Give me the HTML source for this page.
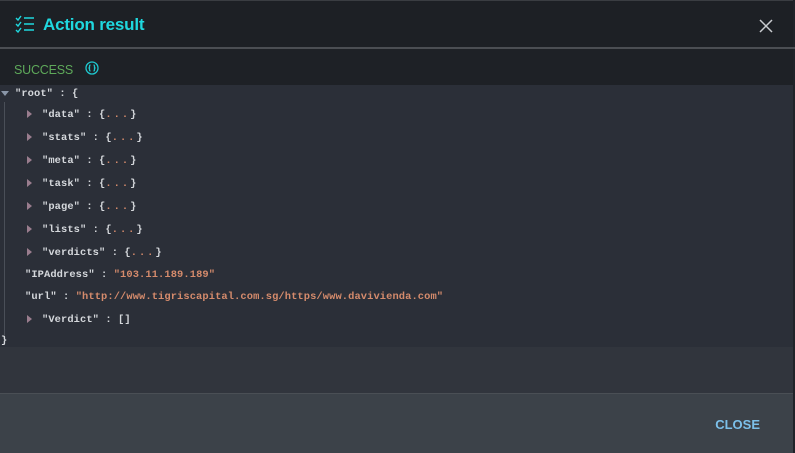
<!DOCTYPE html>
<html><head><style>
body{margin:0;width:795px;height:453px;background:#202329;overflow:hidden;font-family:"Liberation Sans",sans-serif;}
.hdr{position:absolute;left:0;top:0;width:793px;height:47px;background:#1d2025;border-top:1px solid #3a3d42;}
.hdr .t{position:absolute;left:43px;top:14px;color:#1fd8df;font-size:17px;font-weight:bold;letter-spacing:-0.2px;}
.line{position:absolute;left:0;top:47px;width:795px;height:2px;background:#4b4e53;}
.succ{position:absolute;left:0;top:49px;width:793px;height:36px;background:#1e2126;}
.succ span{position:absolute;left:14px;top:14px;color:#5ea95a;font-size:12.5px;letter-spacing:-0.2px;}
.json{position:absolute;left:0;top:85px;width:793px;height:262px;background:#2b2f38;font-family:"Liberation Mono",monospace;font-size:10.4px;letter-spacing:0.1px;font-weight:bold;color:#d5d8dc;}
.gap{position:absolute;left:0;top:347px;width:793px;height:46px;background:#31353d;}
.foot{position:absolute;left:0;top:393px;width:793px;height:59px;background:#3c4249;border-top:1px solid #4a4f55;}
.foot span{position:absolute;right:33px;top:23px;color:#7cc0ea;font-weight:bold;font-size:13px;}
.r{position:absolute;white-space:pre;}
.s{color:#d58b6c;}
.d{color:#d58b6c;letter-spacing:2px;}
.tri{position:absolute;width:0;height:0;border-top:4px solid transparent;border-bottom:4px solid transparent;border-left:5px solid #9a7d8e;}
.vl{position:absolute;left:4px;top:17px;width:1px;height:233px;background:#4a4f58;}
</style></head><body>
<div class="hdr">
<svg style="position:absolute;left:15px;top:14px" width="20" height="18" viewBox="0 0 20 18" fill="none" stroke="#1fd8df" stroke-width="1.4"><path d="M1 3l2 2 3-4M1 9l2 2 3-4M1 15l2 2 3-4M9 3h10M9 9h10M9 15h10"/></svg>
<div class="t">Action result</div>
<svg style="position:absolute;left:759px;top:18px" width="14" height="14" stroke="#c9ccd0" stroke-width="1.5"><path d="M1 1L13 13M13 1L1 13"/></svg>
</div>
<div class="line"></div>
<div class="succ"><span>SUCCESS</span>
<svg style="position:absolute;left:85px;top:12px" width="14" height="14" viewBox="0 0 14 14" fill="none" stroke="#1fc8cf" stroke-width="1.3"><circle cx="7" cy="7" r="6"/><path d="M5.5 4c-1 0-1 1-1 1.5v1L4 7l.5.5v1c0 .5 0 1.5 1 1.5M8.5 4c1 0 1 1 1 1.5v1L10 7l-.5.5v1c0 .5 0 1.5-1 1.5"/></svg>
</div>
<div class="json">
<div class="vl"></div>
<div class="tri" style="left:1px;top:6px;border-left:4px solid transparent;border-right:4px solid transparent;border-top:5px solid #8a96a8;border-bottom:0"></div>
<div class="r" style="left:15px;top:3px">"root" : {</div>
<div class="tri" style="left:27px;top:25px"></div><div class="r" style="left:42px;top:24px">"data" : {<span class="d">...</span>}</div>
<div class="tri" style="left:27px;top:48px"></div><div class="r" style="left:42px;top:47px">"stats" : {<span class="d">...</span>}</div>
<div class="tri" style="left:27px;top:71px"></div><div class="r" style="left:42px;top:70px">"meta" : {<span class="d">...</span>}</div>
<div class="tri" style="left:27px;top:94px"></div><div class="r" style="left:42px;top:93px">"task" : {<span class="d">...</span>}</div>
<div class="tri" style="left:27px;top:117px"></div><div class="r" style="left:42px;top:116px">"page" : {<span class="d">...</span>}</div>
<div class="tri" style="left:27px;top:140px"></div><div class="r" style="left:42px;top:139px">"lists" : {<span class="d">...</span>}</div>
<div class="tri" style="left:27px;top:163px"></div><div class="r" style="left:42px;top:162px">"verdicts" : {<span class="d">...</span>}</div>
<div class="r" style="left:25px;top:184px">"IPAddress" : <span class="s">"103.11.189.189"</span></div>
<div class="r" style="left:25px;top:206px">"url" : <span class="s">"http://www.tigriscapital.com.sg/https/www.davivienda.com"</span></div>
<div class="tri" style="left:27px;top:230px"></div><div class="r" style="left:42px;top:229px">"Verdict" : []</div>
<div class="r" style="left:1px;top:250px">}</div>
</div>
<div class="gap"></div>
<div class="foot"><span>CLOSE</span></div>
</body></html>
